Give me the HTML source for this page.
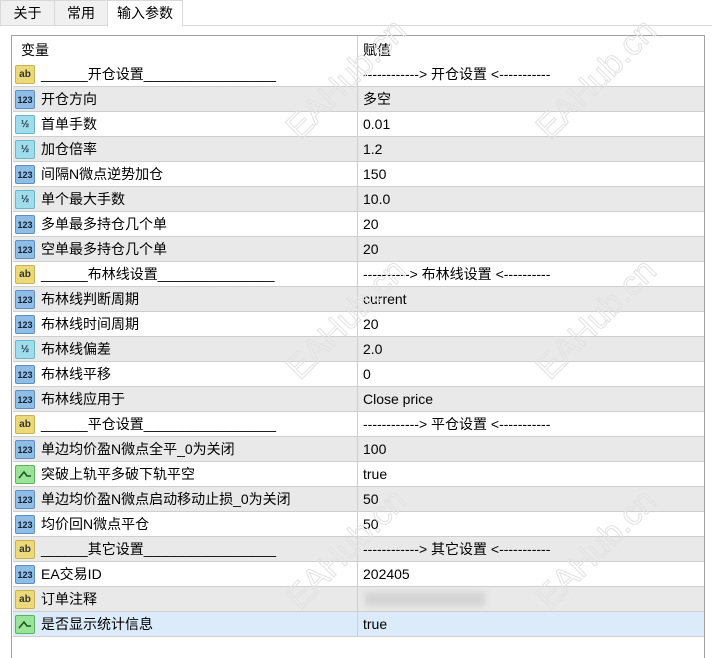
<!DOCTYPE html>
<html><head><meta charset="utf-8"><style>
*{margin:0;padding:0;box-sizing:border-box}
body{width:712px;height:658px;background:#fff;font-family:"Liberation Sans","Noto Sans CJK SC",sans-serif;font-size:14px;color:#000;position:relative;overflow:hidden}
.tabs{position:absolute;left:0;top:0;width:712px;height:26px;border-bottom:1px solid #d9d9d9}
.tab{position:absolute;top:0;height:26px;line-height:25px;background:#f0f0f0;border:1px solid #d9d9d9;text-align:center;font-size:14px}
.tab.a{background:#fff;border-bottom:1px solid #fff;height:27px}
.panel{position:absolute;left:11px;top:35px;width:694px;height:623px;border:1px solid #a0a0a0;border-bottom:none}
.row{position:absolute;left:1px;width:691px;height:25px;border-bottom:1px solid #cfcfcf}
.g{background:#e9e9e9}.s{background:#dcebfa}
.n{position:absolute;left:28px;top:0;height:24px;line-height:24px;white-space:pre}
.v{position:absolute;left:350px;top:0;height:24px;line-height:24px;white-space:pre}
.d{position:absolute;left:344px;top:0;height:25px;border-left:1px solid #cfcfcf}
.ic{position:absolute;left:2px;top:3px;width:20px;height:19px;border-radius:2px;font:bold 10px "Liberation Sans",sans-serif;text-align:center;line-height:18px}
.ab{background:#ecd97a;border:1px solid #c7b25a;color:#333}
.nb{background:#8fbde6;border:1px solid #5d8fc0;color:#123;font-size:9px}
.fr{background:#9fdcec;border:1px solid #6cb4c8;color:#234}
.gr{background:#9be39b;border:1px solid #5ab45a}
.wm{position:absolute;font:normal 34px "Liberation Sans",sans-serif;color:transparent;-webkit-text-stroke:1px #e2e2e2;transform:rotate(-45deg);white-space:nowrap}
</style></head><body>
<div class="tabs">
<div class="tab" style="left:0;width:55px">关于</div>
<div class="tab" style="left:54px;width:54px">常用</div>
<div class="tab a" style="left:107px;width:76px">输入参数</div>
</div>
<div class="panel">
<div class="row" style="top:0;height:26px;border-bottom:none"><span class="n" style="left:8px;top:2px">变量</span><span class="d" style="height:26px"></span><span class="v" style="top:2px">赋值</span></div>
<div class="row" style="top:26px"><span class="ic ab">ab</span><span class="n">______开仓设置_________________</span><span class="d"></span><span class="v">------------&gt; 开仓设置 &lt;-----------</span></div>
<div class="row g" style="top:51px"><span class="ic nb">123</span><span class="n">开仓方向</span><span class="d"></span><span class="v">多空</span></div>
<div class="row" style="top:76px"><span class="ic fr">½</span><span class="n">首单手数</span><span class="d"></span><span class="v">0.01</span></div>
<div class="row g" style="top:101px"><span class="ic fr">½</span><span class="n">加仓倍率</span><span class="d"></span><span class="v">1.2</span></div>
<div class="row" style="top:126px"><span class="ic nb">123</span><span class="n">间隔N微点逆势加仓</span><span class="d"></span><span class="v">150</span></div>
<div class="row g" style="top:151px"><span class="ic fr">½</span><span class="n">单个最大手数</span><span class="d"></span><span class="v">10.0</span></div>
<div class="row" style="top:176px"><span class="ic nb">123</span><span class="n">多单最多持仓几个单</span><span class="d"></span><span class="v">20</span></div>
<div class="row g" style="top:201px"><span class="ic nb">123</span><span class="n">空单最多持仓几个单</span><span class="d"></span><span class="v">20</span></div>
<div class="row" style="top:226px"><span class="ic ab">ab</span><span class="n">______布林线设置_______________</span><span class="d"></span><span class="v">----------&gt; 布林线设置 &lt;----------</span></div>
<div class="row g" style="top:251px"><span class="ic nb">123</span><span class="n">布林线判断周期</span><span class="d"></span><span class="v">current</span></div>
<div class="row" style="top:276px"><span class="ic nb">123</span><span class="n">布林线时间周期</span><span class="d"></span><span class="v">20</span></div>
<div class="row g" style="top:301px"><span class="ic fr">½</span><span class="n">布林线偏差</span><span class="d"></span><span class="v">2.0</span></div>
<div class="row" style="top:326px"><span class="ic nb">123</span><span class="n">布林线平移</span><span class="d"></span><span class="v">0</span></div>
<div class="row g" style="top:351px"><span class="ic nb">123</span><span class="n">布林线应用于</span><span class="d"></span><span class="v">Close price</span></div>
<div class="row" style="top:376px"><span class="ic ab">ab</span><span class="n">______平仓设置_________________</span><span class="d"></span><span class="v">------------&gt; 平仓设置 &lt;-----------</span></div>
<div class="row g" style="top:401px"><span class="ic nb">123</span><span class="n">单边均价盈N微点全平_0为关闭</span><span class="d"></span><span class="v">100</span></div>
<div class="row" style="top:426px"><span class="ic gr"><svg width="18" height="17"><path d="M3 12 L8 6 L11 10 L15 10" stroke="#1a5a1a" stroke-width="1.6" fill="none"/></svg></span><span class="n">突破上轨平多破下轨平空</span><span class="d"></span><span class="v">true</span></div>
<div class="row g" style="top:451px"><span class="ic nb">123</span><span class="n">单边均价盈N微点启动移动止损_0为关闭</span><span class="d"></span><span class="v">50</span></div>
<div class="row" style="top:476px"><span class="ic nb">123</span><span class="n">均价回N微点平仓</span><span class="d"></span><span class="v">50</span></div>
<div class="row g" style="top:501px"><span class="ic ab">ab</span><span class="n">______其它设置_________________</span><span class="d"></span><span class="v">------------&gt; 其它设置 &lt;-----------</span></div>
<div class="row" style="top:526px"><span class="ic nb">123</span><span class="n">EA交易ID</span><span class="d"></span><span class="v">202405</span></div>
<div class="row g" style="top:551px"><span class="ic ab">ab</span><span class="n">订单注释</span><span class="d"></span><span style="position:absolute;left:352px;top:5px;width:120px;height:14px;background:#d4d4d4;filter:blur(3px)"></span></div>
<div class="row s" style="top:576px"><span class="ic gr"><svg width="18" height="17"><path d="M3 12 L8 6 L11 10 L15 10" stroke="#1a5a1a" stroke-width="1.6" fill="none"/></svg></span><span class="n">是否显示统计信息</span><span class="d"></span><span class="v">true</span></div>
</div>
<div class="wm" style="left:270px;top:60px">EAHub.cn</div>
<div class="wm" style="left:520px;top:60px">EAHub.cn</div>
<div class="wm" style="left:270px;top:300px">EAHub.cn</div>
<div class="wm" style="left:520px;top:300px">EAHub.cn</div>
<div class="wm" style="left:270px;top:530px">EAHub.cn</div>
<div class="wm" style="left:520px;top:530px">EAHub.cn</div>
</body></html>
